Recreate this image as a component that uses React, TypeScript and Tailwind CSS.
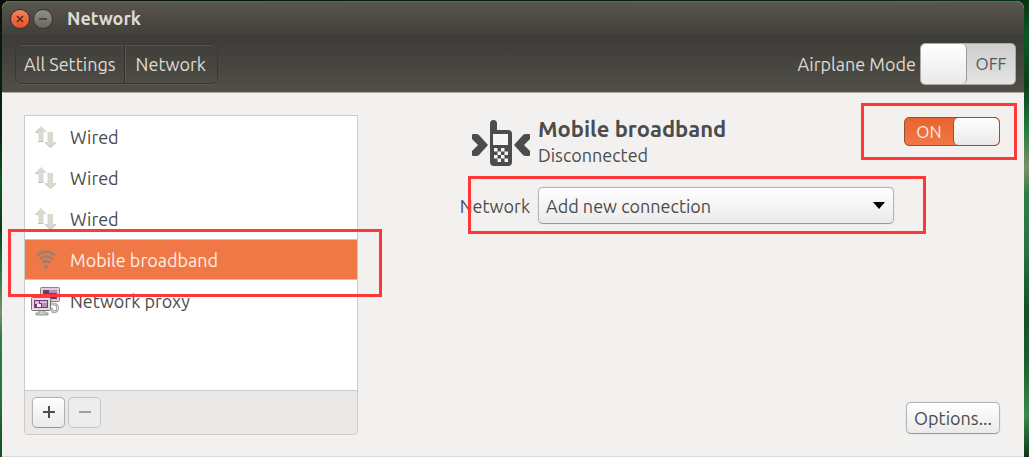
import { useState } from "react";

function WiredIcon() {
  return (
    <svg viewBox="0 0 22 22" className="h-[22px] w-[22px]" aria-hidden="true">
      <path d="M6 0 L12 6 H8.500 V15 H3.500 V6 H0 Z" fill="#dcd8d0" />
      <path d="M12.500 6 H18 V16 H21.500 L15.500 21.500 L9.500 16 H12.500 Z" fill="#dcd8d0" />
      <path d="M3 15.500 H8.500 M0.500 6.500 H3.500 M10 16.500 L15.500 21.500 L21 16.500" stroke="#c2beb6" strokeWidth="1" fill="none" />
    </svg>
  );
}

function SignalIcon() {
  return (
    <svg viewBox="0 0 20 20" className="h-5 w-5" fill="none" stroke="#928377" strokeWidth="2.300" aria-hidden="true">
      <path d="M1 5.500 Q10 -2 19 5.500" />
      <path d="M3.500 9 Q10 3.700 16.500 9" />
      <path d="M6.200 12.700 Q10 9.400 13.800 12.700" />
      <circle cx="10" cy="17" r="2" fill="#928377" stroke="none" />
    </svg>
  );
}

function ProxyIcon() {
  return (
    <svg viewBox="0 0 30 30" className="h-[30px] w-[30px]" aria-hidden="true">
      <rect x="9.500" y="1.500" width="19" height="14" rx="1" fill="#d3d3d0" stroke="#858585" />
      <rect x="12" y="4" width="14" height="9" fill="#783078" />
      <path d="M18 4 H26 V7 H18 Z" fill="#b88bb8" />
      <path d="M21 8 H24 V11 H21 Z" fill="#f3e8f3" />
      <path d="M19 16 V18 H22 C28 17 28 26 23 26 C20 26 22 21 18 23" fill="none" stroke="#8e8e8e" strokeWidth="2.500" />
      <path d="M19 16 V18 H22 C28 17 28 26 23 26 C20 26 22 21 18 23" fill="none" stroke="#efefed" strokeWidth="1" />
      <path d="M8 24 H14 V27 H17 V29 H5 V27 H8 Z" fill="#c9c9c6" stroke="#858585" strokeWidth=".8" />
      <rect x="0.500" y="11.500" width="19" height="13" rx="1" fill="#dededb" stroke="#777" />
      <rect x="3" y="14" width="14" height="8" fill="#803480" />
      <path d="M4 15 H8 V18 H4 Z M9 15 H16 V17 H9 Z" fill="#d9b9d9" />
      <path d="M11 17 H16 V21 H11 Z" fill="#bc8abc" />
      <path d="M6 18 H10 V21 H6 Z" fill="#f5eaf5" />
    </svg>
  );
}

function PhoneIcon() {
  return (
    <svg viewBox="0 0 58 48" className="h-12 w-[58px]" fill="#4c4c4c" aria-hidden="true">
      <path d="M0 16 Q0 15 1 15 H4 Q6 15 7 16 L16 26 L7 36 Q6 37 4 37 H1 Q0 37 0 36 V32 L6 26 L0 20 Z" />
      <path d="M58 16 Q58 15 57 15 H54 Q52 15 51 16 L42 26 L51 36 Q52 37 54 37 H57 Q58 37 58 36 V32 L52 26 L58 20 Z" />
      <path d="M18 4.500 Q18 1 21.500 1 Q25 1 25 4.500 V11 H36 Q40 11 40 15 V43 Q40 47 36 47 H22 Q18 47 18 43 Z" />
      <path
        d="M21 15 H36 V26 H21 Z M22 29 h3.500 v3.500 h-3.500 Z M29 29 h3.500 v3.500 h-3.500 Z M25.500 32.500 h3.500 v3.500 h-3.500 Z M32.500 32.500 h3.500 v3.500 h-3.500 Z M22 36 h3.500 v3.500 h-3.500 Z M29 36 h3.500 v3.500 h-3.500 Z M25.500 39.500 h3.500 v3.500 h-3.500 Z M32.500 39.500 h3.500 v3.500 h-3.500 Z"
        fill="#f5f5f4"
      />
    </svg>
  );
}

const connections = [
  { name: "Wired", icon: <WiredIcon /> },
  { name: "Wired", icon: <WiredIcon /> },
  { name: "Wired", icon: <WiredIcon /> },
  { name: "Mobile broadband", icon: <SignalIcon /> },
  { name: "Network proxy", icon: <ProxyIcon /> },
];

const marker = "pointer-events-none absolute z-10 border-3 border-[#fd3838]";
const raised =
  "rounded-[5px] border border-[#b5b4b1] border-b-[#989794] bg-linear-to-b from-white to-[#ebeaea] shadow-[0_0_1px_#aaa]";

export default function App() {
  const [selected, setSelected] = useState(3);
  const [airplane, setAirplane] = useState(false);
  const [mobile, setMobile] = useState(true);

  return (
    <div className="flex min-h-screen bg-[linear-gradient(172deg,#06110b_0%,#082610_22%,#0b5a24_30%,#0d3c1c_38%,#1f7a3a_45%,#7d8f6a_52%,#2f7d48_56%,#2a7040_66%,#124f25_76%,#1d5c30_84%,#3a8a4a_93%,#0c3518_100%)] pt-px pr-[5px] pl-[2px] font-['Ubuntu','Noto_Sans',sans-serif] text-[18px] leading-6 text-[#4c4c4c]">
      <main className="flex flex-1 flex-col rounded-t-lg border-b border-[#dcdbd9] bg-[#f2f1f0]">
        <header className="rounded-t-lg border-b border-[#aaa8a3] text-[#dfdbd2]">
          <div className="flex h-[34px] items-center rounded-t-lg border-t border-[#69655c] bg-linear-to-b from-[#59564d] to-[#403f3a] px-2">
            <button aria-label="Close" className="mr-[3px] flex h-5 w-5 items-center justify-center rounded-full border border-[#33322e] bg-linear-to-b from-[#f58460] to-[#e5501f]">
              <svg viewBox="0 0 8 8" className="h-2 w-2" stroke="#53291b" strokeWidth="1.500" aria-hidden="true"><path d="M1 1 L7 7 M7 1 L1 7" /></svg>
            </button>
            <button aria-label="Minimize" className="flex h-5 w-5 items-center justify-center rounded-full border border-[#33322e] bg-linear-to-b from-[#92908a] to-[#696760]">
              <svg viewBox="0 0 8 8" className="h-2 w-2" stroke="#3b3a35" strokeWidth="1.500" aria-hidden="true"><path d="M0 4 H8" /></svg>
            </button>
            <h1 className="ml-[14px] pb-px font-bold">Network</h1>
          </div>
          <div className="flex h-[57px] items-center justify-between bg-linear-to-b from-[#3c3b37] to-[#524f48] pr-2 pl-[13px]">
            <nav className="flex h-10 rounded-md border border-[#383732] shadow-[inset_0_1px_0_#56534c,0_1px_0_#5b5850]">
              <button className="border-r border-[#34332f] px-2 shadow-[1px_0_0_#5b5850]">All Settings</button>
              <button className="px-[11px]">Network</button>
            </nav>
            <div className="flex items-center gap-1">
              <span id="airplane">Airplane Mode</span>
              <button role="switch" aria-checked={airplane} aria-labelledby="airplane" onClick={() => setAirplane(!airplane)} className={`flex h-[42px] w-24 overflow-hidden rounded-[5px] border border-[#aaa9a5] bg-linear-to-b from-[#cecece] to-[#e3e3e2] text-[17px] text-[#55575a] ${airplane ? "flex-row-reverse" : "flex-row"}`}>
                <span className="h-full w-[46px] rounded-[5px] border-r border-[#9b9b98] bg-linear-to-b from-white to-[#eae9e8]" />
                <span className="flex h-full flex-1 items-center justify-center">{airplane ? "ON" : "OFF"}</span>
              </button>
            </div>
          </div>
        </header>

        <div className="flex flex-1 gap-[92px] pt-[22px] pr-6 pb-[21px] pl-[22px]">
          <aside className="flex w-[334px] flex-col rounded-b border border-[#cccbc9]">
            <ul className="min-h-[272px] flex-1 bg-white">
              {connections.map((item, index) => (
                <li key={index} className="relative">
                  <button
                    onClick={() => setSelected(index)}
                    className={`flex h-[41px] w-full items-center gap-1 pl-[5px] text-left ${
                      selected === index ? "border-y border-[#f5b494] bg-[#f07746] text-[#faf0e8]" : ""
                    }`}
                  >
                    <span className="flex w-9 items-center justify-center pr-1">{item.icon}</span>
                    {item.name}
                  </button>
                  {index === 3 && <span className={`${marker} -top-[10px] -right-[25px] -bottom-[17px] -left-[17px]`} />}
                </li>
              ))}
            </ul>
            <div className="flex h-11 items-center gap-[3px] rounded-b border-t border-[#cccbc9] bg-[#eae9e8] px-[7px] pb-px">
              <button aria-label="Add" className={`flex h-[31px] w-[33px] items-center justify-center ${raised}`}>
                <svg viewBox="0 0 12 12" className="h-3 w-3" stroke="#4c4c4c" strokeWidth="2" aria-hidden="true"><path d="M0 6 H12 M6 0 V12" /></svg>
              </button>
              <button aria-label="Remove" disabled className="flex h-[31px] w-[33px] items-center justify-center rounded-[5px] border border-[#c5c4c2] bg-[#eeeded]">
                <svg viewBox="0 0 12 12" className="h-3 w-3" stroke="#a49e96" strokeWidth="2" aria-hidden="true"><path d="M0 6 H12" /></svg>
              </button>
            </div>
          </aside>

          <section className="flex flex-1 flex-col justify-between">
            <div className="grid grid-cols-[80px_1fr_98px] gap-x-2 gap-y-5">
              <div className="flex justify-end pt-1"><PhoneIcon /></div>
              <div>
                <h2 className="pt-[2px] text-[22px] leading-6 font-bold">Mobile broadband</h2>
                <p className="pt-[2px] leading-6">Disconnected</p>
              </div>
              <div className="pt-[2px]">
                <div className="relative ml-auto w-24">
                  <button role="switch" aria-checked={mobile} aria-label="Mobile broadband" onClick={() => setMobile(!mobile)} className={`flex h-[29px] w-24 overflow-hidden rounded-[5px] border border-[#9b4c32] bg-linear-to-b from-[#e8642f] to-[#f07746] text-[17px] text-[#fbe9df] ${mobile ? "flex-row" : "flex-row-reverse"}`}>
                    <span className="flex h-full flex-1 items-center justify-center">{mobile ? "ON" : "OFF"}</span>
                    <span className="h-full w-[46px] rounded-[5px] border-l border-[#9b4c32] bg-linear-to-b from-white to-[#eae9e8]" />
                  </button>
                  <span className={`${marker} -top-[14px] -right-[17px] -bottom-[14px] -left-[43px]`} />
                </div>
              </div>

              <label htmlFor="network" className="self-center text-right">Network</label>
              <div className="relative">
                <select id="network" className={`block h-[37px] w-full appearance-none pr-8 pl-[7px] ${raised}`}>
                  <option>Add new connection</option>
                </select>
                <svg viewBox="0 0 12 7" className="pointer-events-none absolute top-[15px] right-[9px] h-[7px] w-3" aria-hidden="true"><path d="M0 0 H12 L6 7 Z" /></svg>
                <span className={`${marker} -top-[11px] -right-8 -bottom-[10px] -left-[70px]`} />
              </div>
            </div>
            <button className={`mb-px h-8 w-[94px] self-end whitespace-nowrap ${raised}`}>Options...</button>
          </section>
        </div>
      </main>
    </div>
  );
}
